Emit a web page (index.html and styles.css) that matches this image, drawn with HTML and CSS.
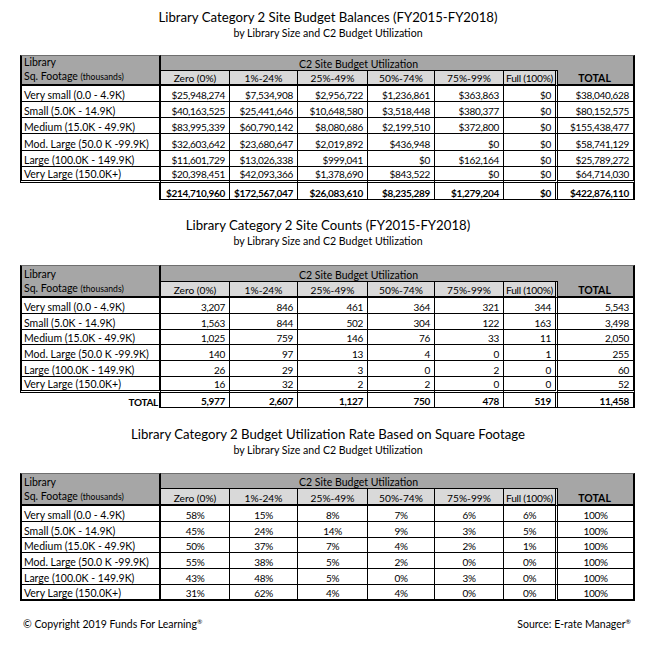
FILE: index.html
```html
<!DOCTYPE html>
<html lang="en">
<head>
<meta charset="utf-8">
<title>Library Category 2 Budget Reports</title>
<link rel="stylesheet" href="styles.css">
</head>
<body>
<div class="page">
  <section class="report report-first">
    <h1 class="title">Library Category 2 Site Budget Balances (FY2015-FY2018)</h1>
    <p class="subtitle">by Library Size and C2 Budget Utilization</p>
    <table class="grid grid-a">
      <colgroup>
        <col class="w-lib"><col class="w-zero"><col class="w-q1"><col class="w-q2"><col class="w-q3"><col class="w-q4"><col class="w-full"><col class="w-total">
      </colgroup>
      <thead>
        <tr class="hr1">
          <th class="lib" rowspan="2"><span class="lib-line">Library</span><span class="lib-line">Sq. Footage <small>(thousands)</small></span></th>
          <th class="group" colspan="6">C2 Site Budget Utilization</th>
          <th class="corner"></th>
        </tr>
        <tr class="hr2">
          <th class="band">Zero (0%)</th>
          <th class="band">1%-24%</th>
          <th class="band">25%-49%</th>
          <th class="band">50%-74%</th>
          <th class="band">75%-99%</th>
          <th class="band band-full">Full (100%)</th>
          <th class="total-h">TOTAL</th>
        </tr>
      </thead>
      <tbody>
        <tr><td class="name">Very small (0.0 - 4.9K)</td><td>$25,948,274</td><td>$7,534,908</td><td>$2,956,722</td><td>$1,236,861</td><td>$363,863</td><td>$0</td><td>$38,040,628</td></tr>
        <tr><td class="name">Small (5.0K - 14.9K)</td><td>$40,163,525</td><td>$25,441,646</td><td>$10,648,580</td><td>$3,518,448</td><td>$380,377</td><td>$0</td><td>$80,152,575</td></tr>
        <tr><td class="name">Medium (15.0K - 49.9K)</td><td>$83,995,339</td><td>$60,790,142</td><td>$8,080,686</td><td>$2,199,510</td><td>$372,800</td><td>$0</td><td>$155,438,477</td></tr>
        <tr><td class="name">Mod. Large (50.0 K -99.9K)</td><td>$32,603,642</td><td>$23,680,647</td><td>$2,019,892</td><td>$436,948</td><td>$0</td><td>$0</td><td>$58,741,129</td></tr>
        <tr><td class="name">Large (100.0K - 149.9K)</td><td>$11,601,729</td><td>$13,026,338</td><td>$999,041</td><td>$0</td><td>$162,164</td><td>$0</td><td>$25,789,272</td></tr>
        <tr><td class="name">Very Large (150.0K+)</td><td>$20,398,451</td><td>$42,093,366</td><td>$1,378,690</td><td>$843,522</td><td>$0</td><td>$0</td><td>$64,714,030</td></tr>
      </tbody>
      <tfoot>
        <tr class="sum"><td class="sum-label"></td><td>$214,710,960</td><td>$172,567,047</td><td>$26,083,610</td><td>$8,235,289</td><td>$1,279,204</td><td>$0</td><td>$422,876,110</td></tr>
      </tfoot>
    </table>
  </section>

  <section class="report report-second">
    <h1 class="title">Library Category 2 Site Counts (FY2015-FY2018)</h1>
    <p class="subtitle">by Library Size and C2 Budget Utilization</p>
    <table class="grid grid-b">
      <colgroup>
        <col class="w-lib"><col class="w-zero"><col class="w-q1"><col class="w-q2"><col class="w-q3"><col class="w-q4"><col class="w-full"><col class="w-total">
      </colgroup>
      <thead>
        <tr class="hr1">
          <th class="lib" rowspan="2"><span class="lib-line">Library</span><span class="lib-line">Sq. Footage <small>(thousands)</small></span></th>
          <th class="group" colspan="6">C2 Site Budget Utilization</th>
          <th class="corner"></th>
        </tr>
        <tr class="hr2">
          <th class="band">Zero (0%)</th>
          <th class="band">1%-24%</th>
          <th class="band">25%-49%</th>
          <th class="band">50%-74%</th>
          <th class="band">75%-99%</th>
          <th class="band band-full">Full (100%)</th>
          <th class="total-h">TOTAL</th>
        </tr>
      </thead>
      <tbody>
        <tr><td class="name">Very small (0.0 - 4.9K)</td><td>3,207</td><td>846</td><td>461</td><td>364</td><td>321</td><td>344</td><td>5,543</td></tr>
        <tr><td class="name">Small (5.0K - 14.9K)</td><td>1,563</td><td>844</td><td>502</td><td>304</td><td>122</td><td>163</td><td>3,498</td></tr>
        <tr><td class="name">Medium (15.0K - 49.9K)</td><td>1,025</td><td>759</td><td>146</td><td>76</td><td>33</td><td>11</td><td>2,050</td></tr>
        <tr><td class="name">Mod. Large (50.0 K -99.9K)</td><td>140</td><td>97</td><td>13</td><td>4</td><td>0</td><td>1</td><td>255</td></tr>
        <tr><td class="name">Large (100.0K - 149.9K)</td><td>26</td><td>29</td><td>3</td><td>0</td><td>2</td><td>0</td><td>60</td></tr>
        <tr><td class="name">Very Large (150.0K+)</td><td>16</td><td>32</td><td>2</td><td>2</td><td>0</td><td>0</td><td>52</td></tr>
      </tbody>
      <tfoot>
        <tr class="sum"><td class="sum-label">TOTAL</td><td>5,977</td><td>2,607</td><td>1,127</td><td>750</td><td>478</td><td>519</td><td>11,458</td></tr>
      </tfoot>
    </table>
  </section>

  <section class="report report-third">
    <h1 class="title">Library Category 2 Budget Utilization Rate Based on Square Footage</h1>
    <p class="subtitle">by Library Size and C2 Budget Utilization</p>
    <table class="grid grid-c">
      <colgroup>
        <col class="w-lib"><col class="w-zero"><col class="w-q1"><col class="w-q2"><col class="w-q3"><col class="w-q4"><col class="w-full"><col class="w-total">
      </colgroup>
      <thead>
        <tr class="hr1">
          <th class="lib" rowspan="2"><span class="lib-line">Library</span><span class="lib-line">Sq. Footage <small>(thousands)</small></span></th>
          <th class="group" colspan="6">C2 Site Budget Utilization</th>
          <th class="corner"></th>
        </tr>
        <tr class="hr2">
          <th class="band">Zero (0%)</th>
          <th class="band">1%-24%</th>
          <th class="band">25%-49%</th>
          <th class="band">50%-74%</th>
          <th class="band">75%-99%</th>
          <th class="band band-full">Full (100%)</th>
          <th class="total-h">TOTAL</th>
        </tr>
      </thead>
      <tbody>
        <tr><td class="name">Very small (0.0 - 4.9K)</td><td>58%</td><td>15%</td><td>8%</td><td>7%</td><td>6%</td><td>6%</td><td>100%</td></tr>
        <tr><td class="name">Small (5.0K - 14.9K)</td><td>45%</td><td>24%</td><td>14%</td><td>9%</td><td>3%</td><td>5%</td><td>100%</td></tr>
        <tr><td class="name">Medium (15.0K - 49.9K)</td><td>50%</td><td>37%</td><td>7%</td><td>4%</td><td>2%</td><td>1%</td><td>100%</td></tr>
        <tr><td class="name">Mod. Large (50.0 K -99.9K)</td><td>55%</td><td>38%</td><td>5%</td><td>2%</td><td>0%</td><td>0%</td><td>100%</td></tr>
        <tr><td class="name">Large (100.0K - 149.9K)</td><td>43%</td><td>48%</td><td>5%</td><td>0%</td><td>3%</td><td>0%</td><td>100%</td></tr>
        <tr><td class="name">Very Large (150.0K+)</td><td>31%</td><td>62%</td><td>4%</td><td>4%</td><td>0%</td><td>0%</td><td>100%</td></tr>
      </tbody>
    </table>
  </section>

  <footer class="footer">
    <span>© Copyright 2019 Funds For Learning<sup>®</sup></span>
    <span>Source: E-rate Manager<sup>®</sup></span>
  </footer>
</div>
</body>
</html>
```

FILE: styles.css
```css
* { box-sizing: border-box; }

html, body {
  margin: 0;
  padding: 0;
  background: #ffffff;
}

body {
  font-family: Lato, "Liberation Sans", sans-serif;
  color: #000;
}

.page {
  width: 656px;
  padding-top: 8px;
  display: flex;
  flex-direction: column;
}

.report {
  display: flex;
  flex-direction: column;
  align-items: center;
}

.report-second { margin-top: 17px; }
.report-third { margin-top: 18px; }

.title {
  margin: 0;
  font-size: 13.2px;
  font-weight: 400;
  line-height: 18px;
  white-space: nowrap;
}

.subtitle {
  margin: 0;
  font-size: 10.6px;
  line-height: 14px;
  white-space: nowrap;
}

.grid {
  align-self: flex-start;
  margin: 16px 0 0 20px;
  width: 615px;
  table-layout: fixed;
  border-collapse: separate;
  border-spacing: 0;
  font-size: 10.5px;
}

.grid-a { margin-top: 15px; }
.grid-b { margin-top: 17px; }

.w-lib { width: 141px; }
.w-zero { width: 69px; }
.w-q1 { width: 68px; }
.w-q2 { width: 70px; }
.w-q3 { width: 67px; }
.w-q4 { width: 69px; }
.w-full { width: 54px; }
.w-total { width: 77px; }

.grid th,
.grid td {
  border: 0 none;
  border-right: 1px solid #000;
  border-bottom: 1px solid #000;
  padding: 0 4px 0 2px;
  line-height: 12px;
  font-weight: 400;
  white-space: nowrap;
  overflow: hidden;
  vertical-align: bottom;
}

.grid td {
  text-align: right;
  font-size: 10px;
  letter-spacing: -0.3px;
}

.grid-c td { text-align: center; padding: 0 1px; }

/* header rows */
.hr1, .hr2 { height: 16px; }
.grid-a .hr1, .grid-a .hr2 { height: 15px; }

.grid .lib {
  background: #a6a6a6;
  text-align: left;
  vertical-align: top;
  padding: 1px 2px 0;
  border-top: 1px solid #6f6f6f;
  border-left: 2px solid #000;
  border-right: 2px solid #000;
  border-bottom: 2px solid #000;
  line-height: 14px;
}

.grid-a .lib {
  padding-top: 0;
  line-height: 13.5px;
}

.lib-line { display: block; }
.lib small { font-size: 8.6px; }

.grid .group {
  background: #a6a6a6;
  text-align: center;
  border-top: 1px solid #6f6f6f;
  border-right: 0 none;
}

.grid .corner {
  background: #a6a6a6;
  border-top: 1px solid #6f6f6f;
  border-right: 2px solid #000;
  border-bottom: 0 none;
}

.grid .band {
  background: #d9d9d9;
  text-align: center;
  font-size: 10.2px;
  padding: 0 1px;
  border-bottom: 2px solid #000;
}

.grid .band-full {
  border-right: 3px double #000;
  padding: 0;
  letter-spacing: -0.25px;
}

.grid .total-h {
  background: #a6a6a6;
  font-weight: 700;
  text-align: center;
  border-right: 2px solid #000;
  border-bottom: 2px solid #000;
}

/* body rows */
.grid-a tbody tr { height: 16px; }
.grid-b tbody tr,
.grid-c tbody tr { height: 15.67px; }

.grid td.name {
  text-align: left;
  font-size: 10.5px;
  letter-spacing: 0;
  padding: 0 2px;
  border-left: 2px solid #000;
  border-right: 2px solid #000;
}

.grid tbody td:nth-child(7),
.grid tfoot td:nth-child(7) { border-right: 3px double #000; }

.grid tbody td:nth-child(8),
.grid tfoot td:nth-child(8) { border-right: 2px solid #000; }

.grid-a tbody tr:last-child td,
.grid-b tbody tr:last-child td { border-bottom: 3px double #000; }

.grid-c tbody tr:last-child td { border-bottom: 2px solid #000; }

/* totals */
.sum { height: 17px; }
.grid-b .sum { height: 15px; }

.grid .sum td {
  font-weight: 700;
}

.grid .sum td.sum-label {
  border-bottom: 0 none;
  border-right: 2px solid #000;
  text-align: right;
  font-size: 10px;
  padding-right: 1px;
}

/* footer */
.footer {
  display: flex;
  justify-content: space-between;
  margin-top: 17px;
  padding: 0 25px 0 23px;
  font-size: 10.5px;
  line-height: 14px;
}

.footer sup {
  font-size: 6.5px;
  vertical-align: 4px;
  line-height: 0;
}
```
